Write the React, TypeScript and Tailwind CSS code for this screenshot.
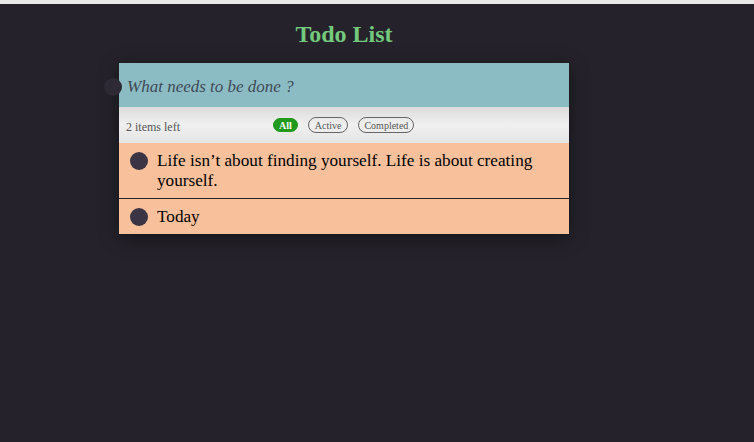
import React from 'react';

interface Todo {
  id: number;
  text: string;
}

const todos: Todo[] = [
  { id: 1, text: 'Life isn’t about finding yourself. Life is about creating yourself.' },
  { id: 2, text: 'Today' },
];

const TodoItem: React.FC<{ todo: Todo; last: boolean }> = ({ todo, last }) => (
  <li
    className={`flex items-start gap-[9px] bg-[#f8c09b] pl-[11px] pr-6 pt-2 pb-[7px] ${
      last ? '' : 'border-b border-[#2a2226]'
    }`}
  >
    <span className="mt-[1px] h-[18px] w-[18px] shrink-0 rounded-full bg-[#3a3444]" />
    <span className="text-[17.2px] leading-5 text-black">{todo.text}</span>
  </li>
);

const App: React.FC = () => {
  return (
    <div className="min-h-[442px] bg-[#25222b] font-['Liberation_Serif',serif]">
      <div className="h-1 bg-[#e9e9ea]" />
      <div className="ml-[119px] w-[450px] pb-10">
        <h1 className="pt-[16px] pb-[15px] text-center text-2xl font-bold leading-7 text-[#73c97c]">
          Todo List
        </h1>
        <div className="shadow-[0_4px_18px_rgba(0,0,0,0.45)]">
          <div className="flex h-[44px] items-center bg-[#8bbcc4] pt-[4px]">
            <span className="-ml-[15px] h-[18px] w-[18px] shrink-0 rounded-full bg-[#2d2935]" />
            <span className="ml-[5px] text-[17px] italic text-[#3f4a55]">What needs to be done ?</span>
          </div>
          <div className="flex h-9 items-center bg-gradient-to-b from-[#dcdcdc] via-[#f0f0f0] to-[#e4e4e4] pl-[7px]">
            <span className="mt-[4px] w-[147px] text-xs text-[#555]">2 items left</span>
            <div className="flex items-center gap-[10px]">
              <button className="flex h-[14px] items-center rounded-full border border-[#1f9a1c] bg-[#1f9a1c] px-[5px] text-[10px] font-bold text-white">
                All
              </button>
              <button className="flex h-[16px] items-center rounded-full border border-[#666] px-[6px] text-[10px] text-[#555]">
                Active
              </button>
              <button className="flex h-[16px] items-center rounded-full border border-[#666] px-[5px] text-[10px] text-[#555]">
                Completed
              </button>
            </div>
          </div>
          <ul>
            {todos.map((t, i) => (
              <TodoItem key={t.id} todo={t} last={i === todos.length - 1} />
            ))}
          </ul>
        </div>
      </div>
    </div>
  );
};

export default App;
